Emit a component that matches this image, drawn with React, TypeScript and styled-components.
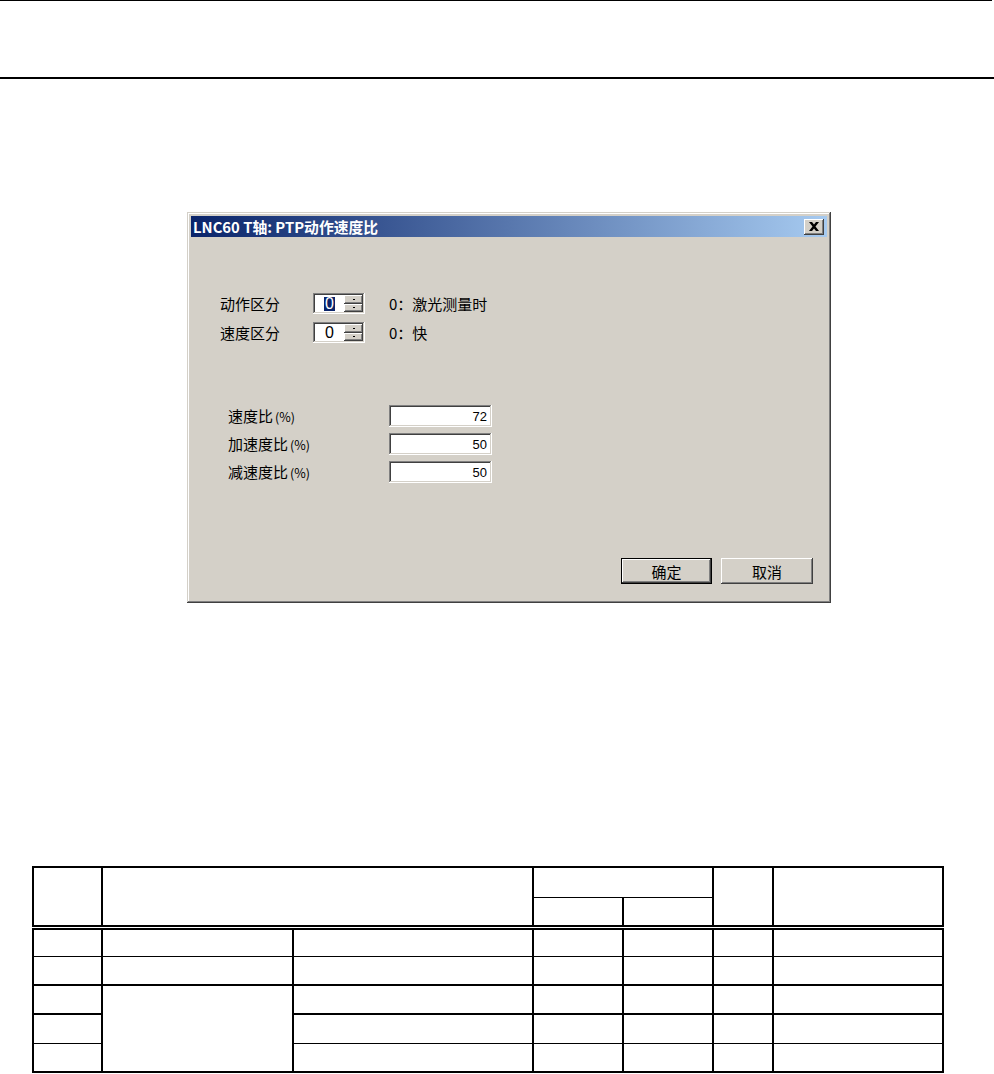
import React from "react";
import styled, { createGlobalStyle } from "styled-components";

const GlobalStyle = createGlobalStyle`
  html, body { margin: 0; padding: 0; background: #ffffff; }
  body { font-family: "Noto Sans CJK SC", "Liberation Sans", sans-serif; color: #000; }
  #root { width: 994px; }
`;

const Page = styled.div`
  width: 994px;
  min-height: 1074px;
  background: #fff;
  display: flex;
  flex-direction: column;
  align-items: flex-start;
`;

const PageHeader = styled.header`
  width: 994px;
  height: 77px;
  border-bottom: 2px solid #000;
  display: flex;
  flex-direction: column;
  &::before {
    content: "";
    display: block;
    width: 992px;
    height: 1px;
    background: #000;
  }
`;

const Window = styled.section`
  margin: 133px 0 0 187px;
  width: 644px;
  height: 391px;
  box-sizing: border-box;
  padding: 4px;
  background: #d4d0c8;
  box-shadow: inset -1px -1px #404040, inset 1px 1px #d4d0c8,
    inset -2px -2px #808080, inset 2px 2px #ffffff;
  display: flex;
  flex-direction: column;
`;

const TitleBar = styled.div`
  height: 21px;
  flex: none;
  background: linear-gradient(to right, #0a246a, #a6caf0);
  display: flex;
  align-items: center;
  justify-content: space-between;
  padding: 0 3px 0 2px;
`;

const TitleText = styled.span`
  color: #fff;
  font-family: "Noto Sans CJK SC", sans-serif;
  font-weight: 700;
  font-size: 14.8px;
  line-height: 21px;
  white-space: nowrap;
`;

const CloseButton = styled.button`
  width: 20px;
  height: 16px;
  padding: 0;
  border: none;
  background: #d4d0c8;
  box-shadow: inset -1px -1px #404040, inset 1px 1px #ffffff,
    inset -2px -2px #808080, inset 2px 2px #d4d0c8;
  display: flex;
  align-items: center;
  justify-content: center;
`;

const Content = styled.div`
  flex: 1;
  display: flex;
  flex-direction: column;
  padding: 56px 14px 15px 29px;
`;

const SpinGroup = styled.div`
  display: flex;
  flex-direction: column;
  gap: 8px;
`;

const SpinRow = styled.div`
  display: grid;
  grid-template-columns: 69px 52px auto;
  column-gap: 24px;
  align-items: center;
  height: 21px;
`;

const Label = styled.span`
  font-size: 15px;
  line-height: 21px;
  white-space: nowrap;
`;

const Unit = styled.span`
  font-size: 12.5px;
  margin-left: 2px;
`;

const Spinner = styled.div`
  width: 52px;
  height: 21px;
  box-sizing: border-box;
  padding: 2px;
  background: #fff;
  box-shadow: inset -1px -1px #ffffff, inset 1px 1px #808080,
    inset -2px -2px #d4d0c8, inset 2px 2px #404040;
  display: flex;
`;

const SpinText = styled.div`
  flex: 1;
  display: flex;
  align-items: center;
  justify-content: center;
  font-family: "Liberation Sans", sans-serif;
  font-size: 16px;
  line-height: 17px;
`;

const Selected = styled.span<{ $active?: boolean }>`
  padding: 0 1px;
  line-height: 14px;
  background: ${(p) => (p.$active ? "#0a246a" : "transparent")};
  color: ${(p) => (p.$active ? "#fff" : "#000")};
`;

const SpinButtons = styled.div`
  width: 19px;
  display: flex;
  flex-direction: column;
`;

const SpinButton = styled.div`
  flex: 1;
  background: #d4d0c8;
  box-shadow: inset -1px -1px #404040, inset 1px 1px #ffffff,
    inset -2px -2px #808080, inset 2px 2px #d4d0c8;
  display: flex;
  align-items: center;
  justify-content: center;
`;

const Dot = styled.span`
  width: 2px;
  height: 1px;
  background: #000;
`;

const FieldGroup = styled.div`
  margin-top: 62px;
  padding-left: 8px;
  display: flex;
  flex-direction: column;
  gap: 6px;
`;

const FieldRow = styled.div`
  display: grid;
  grid-template-columns: 161px 103px;
  align-items: center;
  height: 22px;
`;

const NumberBox = styled.div`
  width: 103px;
  height: 22px;
  box-sizing: border-box;
  padding: 0 5px;
  background: #fff;
  box-shadow: inset -1px -1px #ffffff, inset 1px 1px #808080,
    inset -2px -2px #d4d0c8, inset 2px 2px #404040;
  display: flex;
  align-items: center;
  justify-content: flex-end;
  font-family: "Liberation Sans", sans-serif;
  font-size: 13px;
`;

const ButtonRow = styled.div`
  margin-top: auto;
  display: flex;
  justify-content: flex-end;
  gap: 9px;
`;

const PushButton = styled.button<{ $default?: boolean; $w: number }>`
  width: ${(p) => p.$w}px;
  height: 26px;
  box-sizing: border-box;
  padding: 0;
  border: ${(p) => (p.$default ? "1px solid #000" : "none")};
  background: #d4d0c8;
  box-shadow: inset -1px -1px #404040, inset 1px 1px #ffffff,
    inset -2px -2px #808080, inset 2px 2px #d4d0c8;
  font-family: "Noto Sans CJK SC", sans-serif;
  font-size: 15px;
  color: #000;
`;

const Table = styled.table`
  margin: 263px 0 0 32px;
  width: 910px;
  border-collapse: collapse;
  table-layout: fixed;
  border: 2px solid #000;
`;

const Cell = styled.td<{ $bottom?: string }>`
  padding: 0;
  border-left: 2px solid #000;
  border-right: 2px solid #000;
  border-bottom: ${(p) => p.$bottom ?? "1px solid #000"};
`;

const HeadCell = styled.th<{ $bottom?: string }>`
  padding: 0;
  font-weight: 400;
  border-left: 2px solid #000;
  border-right: 2px solid #000;
  border-bottom: ${(p) => p.$bottom ?? "5px double #000"};
`;

const HeadRow = styled.tr`
  height: 30px;
`;

const BodyRow = styled.tr`
  height: 29px;
`;

const widths = [69, 191, 240, 90, 90, 60, 170];

function Spin({ value, active }: { value: string; active?: boolean }) {
  return (
    <Spinner>
      <SpinText>
        <Selected $active={active}>{value}</Selected>
      </SpinText>
      <SpinButtons>
        <SpinButton>
          <Dot />
        </SpinButton>
        <SpinButton>
          <Dot />
        </SpinButton>
      </SpinButtons>
    </Spinner>
  );
}

const thick = "2px solid #000";
const thin = "1px solid #000";

export default function App() {
  return (
    <Page>
      <GlobalStyle />
      <PageHeader />
      <Window>
        <TitleBar>
          <TitleText>LNC60 T轴: PTP动作速度比</TitleText>
          <CloseButton aria-label="close">
            <svg width="10" height="9" viewBox="0 0 10 9">
              <path
                d="M0 0h3l2 2.5L7 0h3L6.5 4.5 10 9H7L5 6.5 3 9H0l3.5-4.5z"
                fill="#000"
              />
            </svg>
          </CloseButton>
        </TitleBar>
        <Content>
          <SpinGroup>
            <SpinRow>
              <Label>动作区分</Label>
              <Spin value="0" active />
              <Label>0：激光测量时</Label>
            </SpinRow>
            <SpinRow>
              <Label>速度区分</Label>
              <Spin value="0" />
              <Label>0：快</Label>
            </SpinRow>
          </SpinGroup>
          <FieldGroup>
            <FieldRow>
              <Label>
                速度比<Unit>(%)</Unit>
              </Label>
              <NumberBox>72</NumberBox>
            </FieldRow>
            <FieldRow>
              <Label>
                加速度比<Unit>(%)</Unit>
              </Label>
              <NumberBox>50</NumberBox>
            </FieldRow>
            <FieldRow>
              <Label>
                减速度比<Unit>(%)</Unit>
              </Label>
              <NumberBox>50</NumberBox>
            </FieldRow>
          </FieldGroup>
          <ButtonRow>
            <PushButton $default $w={91}>
              确定
            </PushButton>
            <PushButton $w={92}>取消</PushButton>
          </ButtonRow>
        </Content>
      </Window>
      <Table>
        <colgroup>
          {widths.map((w, i) => (
            <col key={i} style={{ width: w }} />
          ))}
        </colgroup>
        <thead>
          <HeadRow>
            <HeadCell rowSpan={2} />
            <HeadCell rowSpan={2} colSpan={2} />
            <HeadCell colSpan={2} $bottom={thin} />
            <HeadCell rowSpan={2} />
            <HeadCell rowSpan={2} />
          </HeadRow>
          <HeadRow>
            <HeadCell />
            <HeadCell />
          </HeadRow>
        </thead>
        <tbody>
          <BodyRow>
            {widths.map((_, i) => (
              <Cell key={i} $bottom={thin} />
            ))}
          </BodyRow>
          <BodyRow>
            {widths.map((_, i) => (
              <Cell key={i} $bottom={thick} />
            ))}
          </BodyRow>
          <BodyRow>
            <Cell $bottom={thick} />
            <Cell rowSpan={3} $bottom={thick} />
            {widths.slice(2).map((_, i) => (
              <Cell key={i} $bottom={thick} />
            ))}
          </BodyRow>
          <BodyRow>
            <Cell $bottom={thin} />
            {widths.slice(2).map((_, i) => (
              <Cell key={i} $bottom={thin} />
            ))}
          </BodyRow>
          <BodyRow>
            <Cell $bottom={thick} />
            {widths.slice(2).map((_, i) => (
              <Cell key={i} $bottom={thick} />
            ))}
          </BodyRow>
        </tbody>
      </Table>
    </Page>
  );
}
